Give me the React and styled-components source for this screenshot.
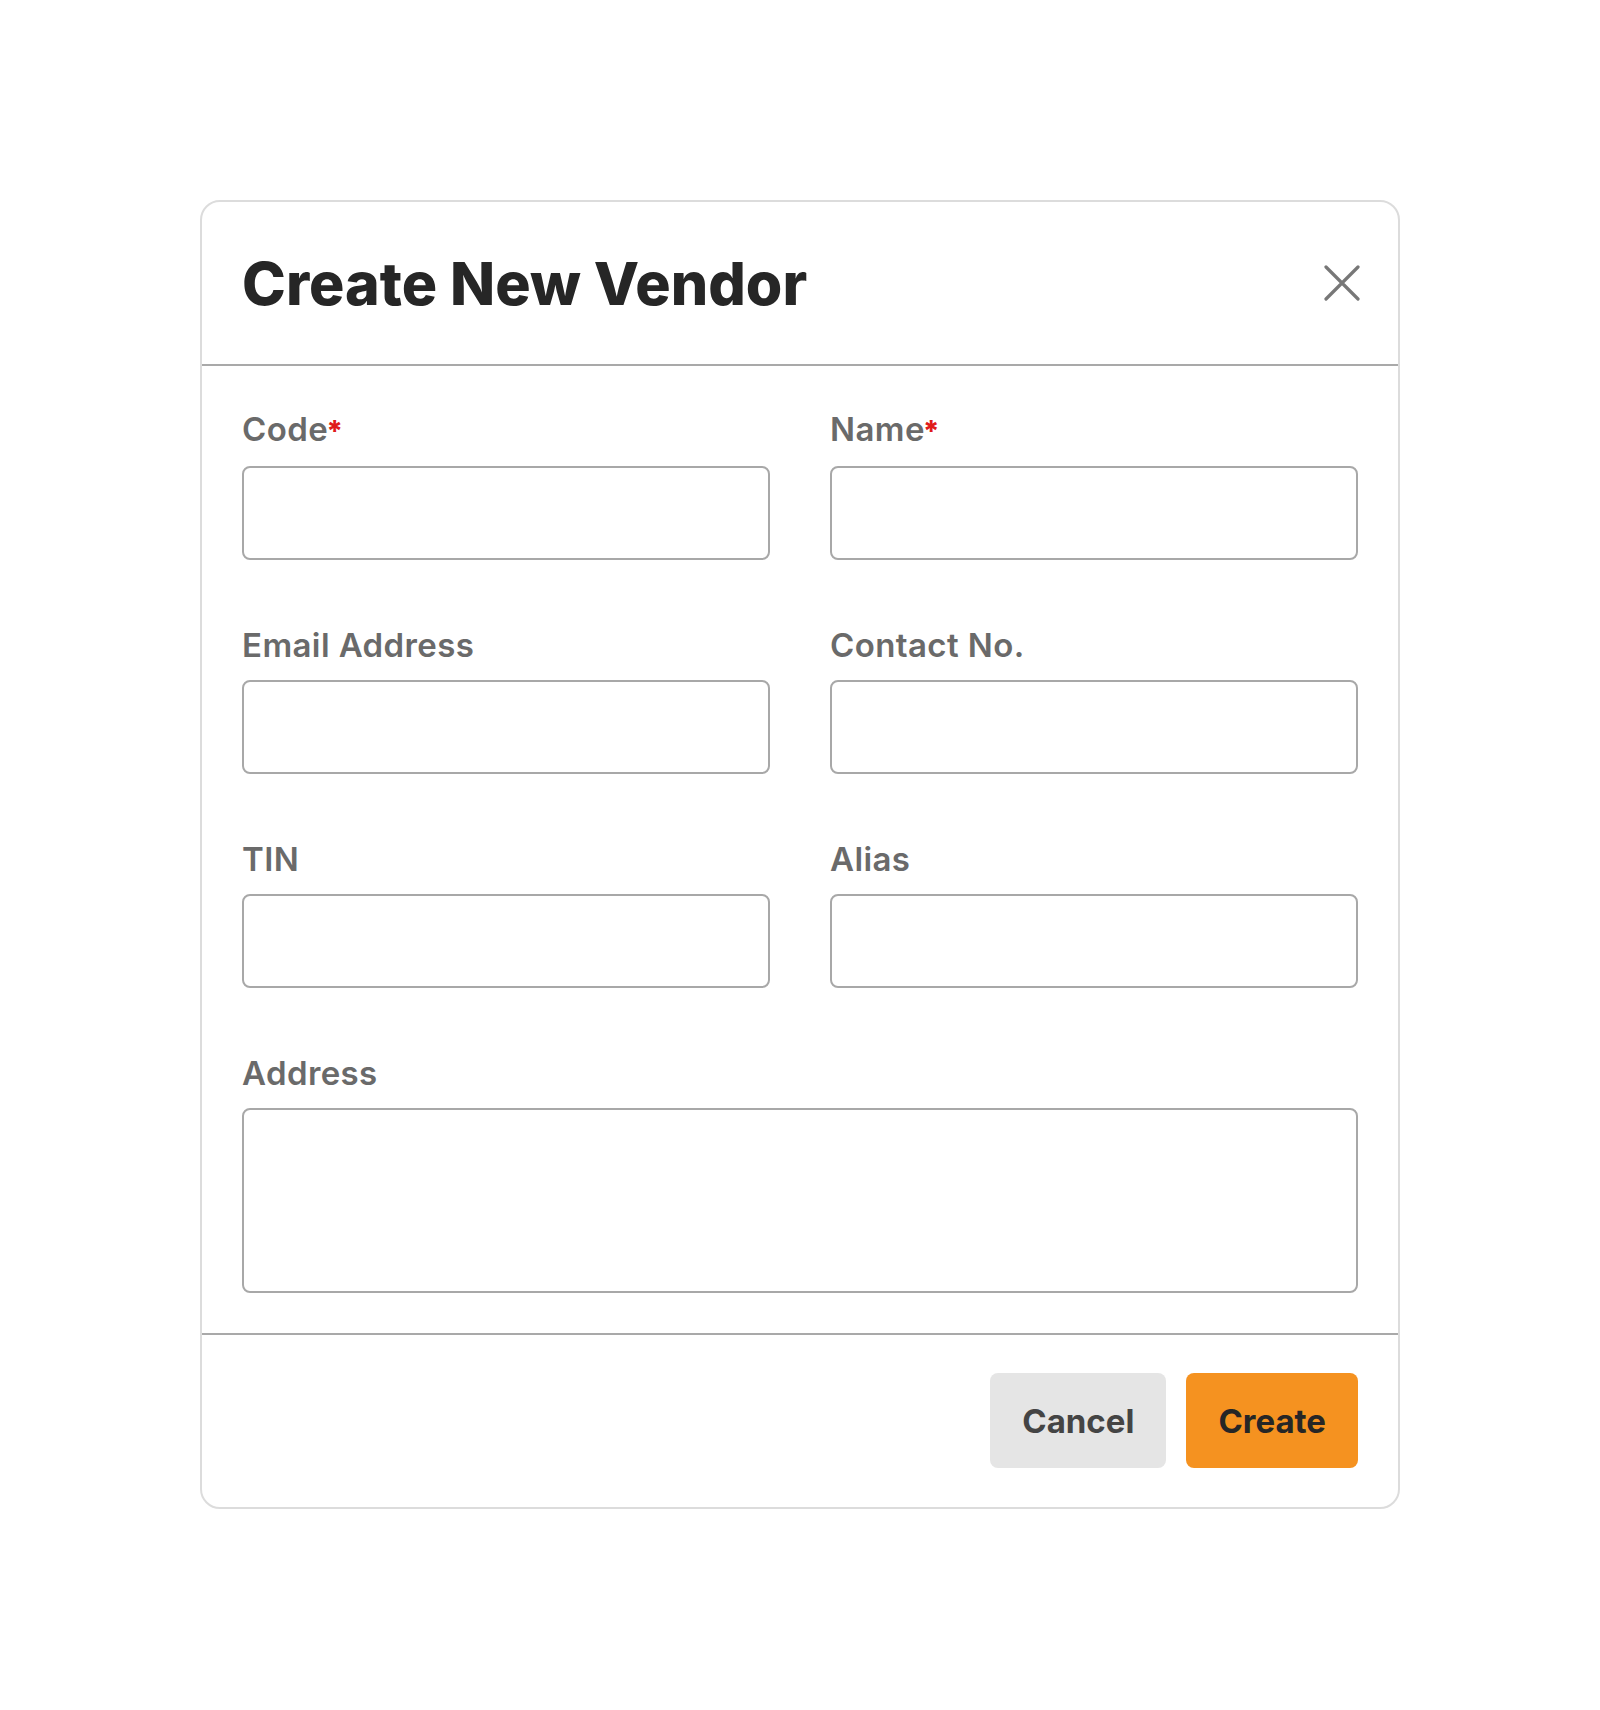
import React from "react";
import styled, { createGlobalStyle } from "styled-components";

const Global = createGlobalStyle`
  html, body { margin: 0; padding: 0; background: #ffffff; }
  body { font-family: Inter, "Liberation Sans", sans-serif; }
  * { box-sizing: border-box; }
`;

const Page = styled.div`
  width: 1600px;
  min-height: 1710px;
  padding: 200px 200px 0;
  background: #ffffff;
`;

const Modal = styled.div`
  width: 1200px;
  border: 2px solid #dcdcdc;
  border-radius: 20px;
  background: #ffffff;
  display: flex;
  flex-direction: column;
`;

const Header = styled.div`
  height: 164px;
  padding: 0 36px 0 40px;
  display: flex;
  align-items: center;
  justify-content: space-between;
  border-bottom: 2px solid #a9a9a9;
`;

const Title = styled.h1`
  margin: 0;
  font-family: Inter, "Liberation Sans", sans-serif;
  font-size: 59px;
  font-weight: 800;
  letter-spacing: 0;
  color: #262626;
  line-height: 1;
`;

const CloseButton = styled.button`
  border: 0;
  background: transparent;
  padding: 0;
  width: 40px;
  height: 40px;
  display: flex;
  align-items: center;
  justify-content: center;
  cursor: pointer;
`;

const Body = styled.div`
  padding: 44px 40px 40px;
  display: grid;
  grid-template-columns: 1fr 1fr;
  column-gap: 60px;
  row-gap: 66px;
  border-bottom: 2px solid #a9a9a9;
`;

const Field = styled.div`
  display: flex;
  flex-direction: column;
  gap: 16px;
  grid-column: ${(p) => (p.$wide ? "1 / -1" : "auto")};
`;

const Label = styled.label`
  display: block;
  font-family: Inter, "Liberation Sans", sans-serif;
  font-size: 33px;
  font-weight: 600;
  letter-spacing: 0.4px;
  line-height: 38px;
  color: #6a6a6a;
`;

const Star = styled.span`
  color: #e01b1b;
  font-size: 29px;
  font-weight: 800;
  margin-left: -2px;
`;

const Input = styled.input`
  height: 94px;
  width: 100%;
  border: 2px solid #a8a8a8;
  border-radius: 8px;
  background: #ffffff;
  padding: 0 20px;
  font-size: 28px;
  outline: none;
`;

const TextArea = styled.textarea`
  height: 185px;
  width: 100%;
  border: 2px solid #a8a8a8;
  border-radius: 8px;
  background: #ffffff;
  padding: 16px 20px;
  font-size: 28px;
  resize: none;
  outline: none;
  display: block;
`;

const Footer = styled.div`
  padding: 38px 40px 39px;
  display: flex;
  justify-content: flex-end;
  gap: 20px;
`;

const Button = styled.button`
  height: 95px;
  padding: 0 32px;
  border: 0;
  border-radius: 8px;
  background: ${(p) => (p.$primary ? "#f59220" : "#e5e5e5")};
  color: ${(p) => (p.$primary ? "#262626" : "#444444")};
  font-family: Inter, "Liberation Sans", sans-serif;
  font-size: 33px;
  font-weight: 700;
  cursor: pointer;
`;

export default function App() {
  return (
    <>
      <Global />
      <Page>
        <Modal>
          <Header>
            <Title>Create New Vendor</Title>
            <CloseButton aria-label="Close">
              <svg width="36" height="36" viewBox="0 0 36 36" fill="none">
                <path d="M2 2 L34 34 M34 2 L2 34" stroke="#777777" strokeWidth="3.2" strokeLinecap="round" />
              </svg>
            </CloseButton>
          </Header>
          <Body>
            <Field>
              <Label>Code<Star>*</Star></Label>
              <Input />
            </Field>
            <Field>
              <Label>Name<Star>*</Star></Label>
              <Input />
            </Field>
            <Field>
              <Label>Email Address</Label>
              <Input />
            </Field>
            <Field>
              <Label>Contact No.</Label>
              <Input />
            </Field>
            <Field>
              <Label>TIN</Label>
              <Input />
            </Field>
            <Field>
              <Label>Alias</Label>
              <Input />
            </Field>
            <Field $wide>
              <Label>Address</Label>
              <TextArea />
            </Field>
          </Body>
          <Footer>
            <Button>Cancel</Button>
            <Button $primary>Create</Button>
          </Footer>
        </Modal>
      </Page>
    </>
  );
}
